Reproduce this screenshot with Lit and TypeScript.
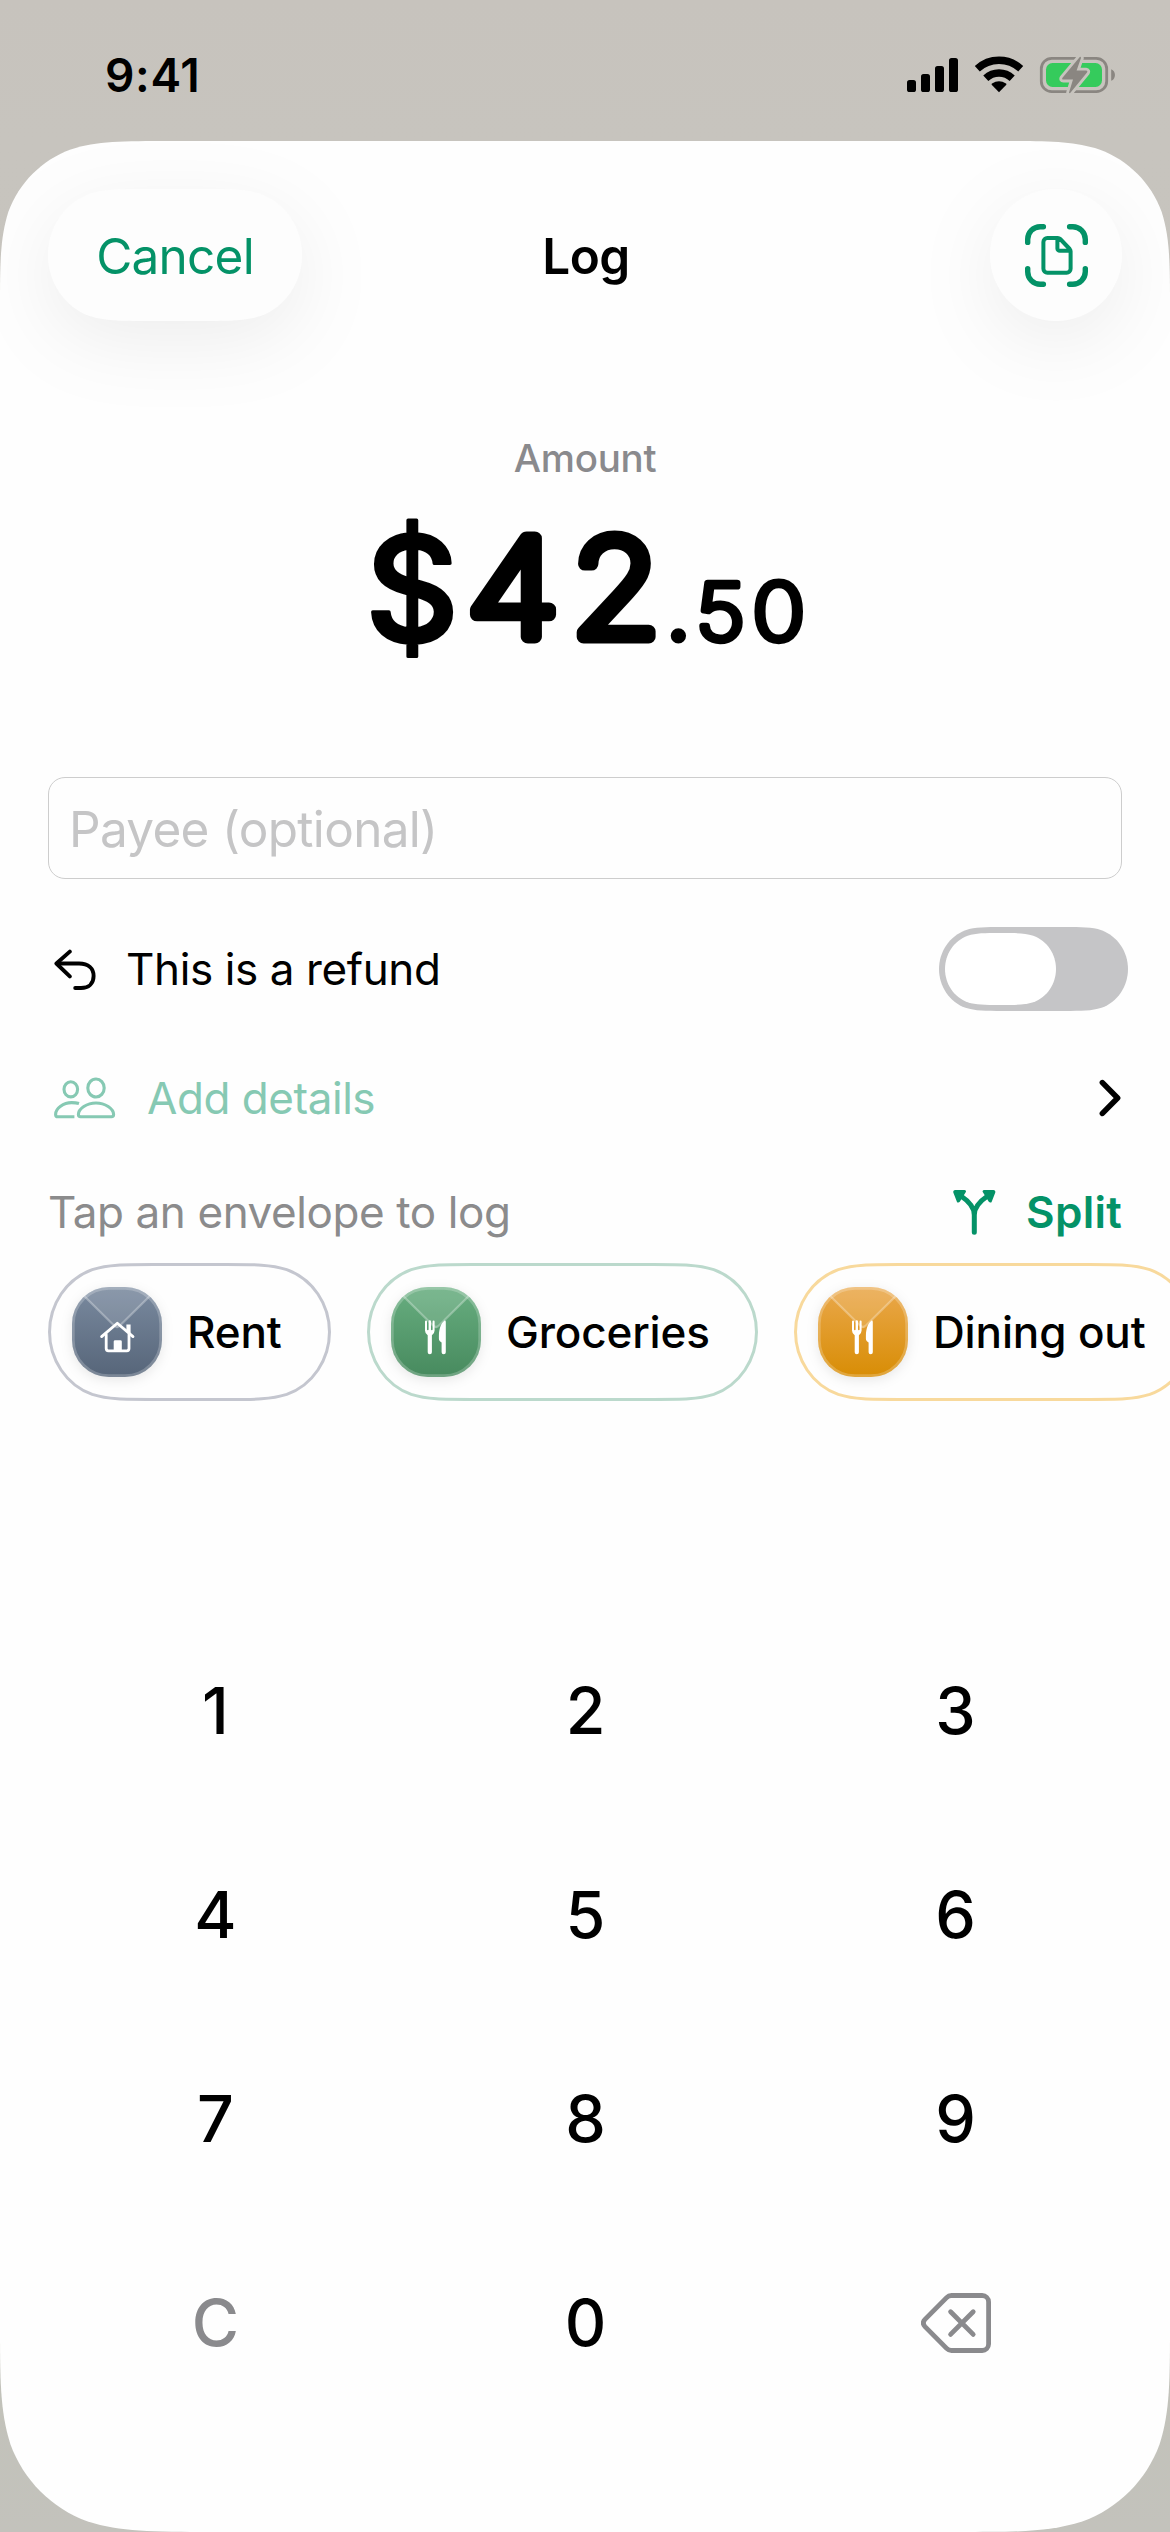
import { LitElement, html, svg, css } from "lit";
import { customElement, property } from "lit/decorators.js";

/** Path of a continuous-curvature rectangle; short ones become capsules. */
function smoothRect(w: number, h: number, r: number, inset = 0, rBottom = r): string {
  const x0 = inset;
  const y0 = inset;
  const x1 = w - inset;
  const y1 = h - inset;
  const capsule = y1 - y0 < 3.05 * r;
  const corner = (cx: number, cy: number, sx: number, sy: number, q: number, reverse: boolean) => {
    const side: number[][] = capsule
      ? [[0, 1], [0, 0.59], [0.246, 0.215], [0.63149, 0.07491]]
      : [[0, 1.52866], [0, 1.08849], [0, 0.86841], [0.07491, 0.63149], [0.16906, 0.37282], [0.37282, 0.16906], [0.63149, 0.07491]];
    const pts = [...side, [0.86841, 0], [1.08849, 0], [1.52866, 0]];
    const ordered = reverse ? pts.reverse() : pts;
    const p = ordered.map(([a, b]) => `${(cx + sx * a * q).toFixed(2)} ${(cy + sy * b * q).toFixed(2)}`);
    let d = `L${p[0]}`;
    for (let i = 1; i < p.length; i += 3) d += `C${p[i]} ${p[i + 1]} ${p[i + 2]}`;
    return d;
  };
  const path =
    corner(x0, y0, 1, 1, r, false) +
    corner(x1, y0, -1, 1, r, true) +
    corner(x1, y1, -1, -1, rBottom, false) +
    corner(x0, y1, 1, -1, rBottom, true);
  return "M" + path.slice(1) + "Z";
}

const GREEN = "#049267";

const houseGlyph = svg`
  <g fill="none" stroke="#fff" stroke-width="2.8" stroke-linecap="round" stroke-linejoin="round">
    <path d="M29.6 49.6L45.3 36.2L61 49.6"/>
    <path d="M34.2 47.5V61.6A2.2 2.2 0 0 0 36.4 63.8H54.8A2.2 2.2 0 0 0 57 61.6V47.5"/>
  </g>
  <path fill="#fff" d="M54.4 37.6H58.6V47L54.4 43.4Z"/>
  <path fill="#fff" d="M41.7 64V54.6A1.4 1.4 0 0 1 43.1 53.2H48.4A1.4 1.4 0 0 1 49.8 54.6V64Z"/>`;

const forkGlyph = svg`
  <g fill="#fff">
    <path d="M34 34.4A1 1 0 0 1 36 34.4V42.4A.8 .8 0 0 0 37.6 42.4V34.4A1 1 0 0 1 40 34.4V42.4A.8 .8 0 0 0 41.6 42.4V34.4A1 1 0 0 1 43.6 34.4V43.6Q43.6 46.6 40.9 48.3V65.2A2.1 2.1 0 0 1 36.7 65.2V48.3Q34 46.6 34 43.6Z"/>
    <path d="M54.8 35V65.2A2.1 2.1 0 0 1 50.6 65.2V55.6L48.9 54.2Q47.8 53.3 47.9 51.8V48.4C48 41 50.4 36 53 33.9C54 33.2 54.8 33.8 54.8 35Z"/>
  </g>`;

interface Envelope {
  name: string;
  width: number;
  ring: string;
  top: string;
  bottom: string;
  glyph: unknown;
}

const ENVELOPES: Envelope[] = [
  { name: "Rent", width: 283, ring: "#c4c6cf", top: "#7a8a9f", bottom: "#566579", glyph: houseGlyph },
  { name: "Groceries", width: 391, ring: "#bbd9cc", top: "#68ae80", bottom: "#478a5e", glyph: forkGlyph },
  { name: "Dining out", width: 400, ring: "#f8d99c", top: "#eaa84c", bottom: "#d88d05", glyph: forkGlyph },
];

@customElement("envelope-chip")
export class EnvelopeChip extends LitElement {
  @property({ attribute: false }) envelope!: Envelope;

  static styles = css`
    :host { display: block; flex: none; }
    .chip {
      position: relative;
      display: flex;
      align-items: center;
      height: 138px;
      box-sizing: border-box;
      padding-left: 24px;
      gap: 25px;
    }
    .ring { position: absolute; left: 0; top: 0; }
    .tile { flex: none; overflow: visible; filter: drop-shadow(0 3px 6px rgba(0, 0, 0, 0.09)); position: relative; }
    .name { font: 500 44px/60px Inter, sans-serif; letter-spacing: -0.14px; color: #000; white-space: nowrap; }
  `;

  render() {
    const e = this.envelope;
    return html`
      <div class="chip" style="width:${e.width}px">
        <svg class="ring" width=${e.width} height="138">
          <path d=${smoothRect(e.width, 138, 67.7, 1.5)} fill="none" stroke=${e.ring} stroke-width="3"/>
        </svg>
        <svg class="tile" width="90" height="90">
          <defs>
            <linearGradient id="g" x1="0" y1="0" x2="0" y2="1">
              <stop offset="0" stop-color=${e.top}/><stop offset="1" stop-color=${e.bottom}/>
            </linearGradient>
            <clipPath id="c"><rect width="90" height="90" rx="37"/></clipPath>
          </defs>
          <rect width="90" height="90" rx="37" fill="url(#g)"/>
          <g clip-path="url(#c)">
            <path d="M0 -3L45 41.5L90 -3Z" fill="#fff" fill-opacity=".13"/>
            <path d="M0 -3L42 38.5Q45 41.5 48 38.5L90 -3" fill="none" stroke="#fff" stroke-opacity=".3" stroke-width="2.2"/>
            <rect width="90" height="90" rx="37" fill="none" stroke="#fff" stroke-opacity=".22" stroke-width="5.4"/>
          </g>
          ${e.glyph}
        </svg>
        <span class="name">${e.name}</span>
      </div>`;
  }
}

@customElement("status-bar")
export class StatusBar extends LitElement {
  static styles = css`
    :host { display: block; }
    .bar {
      display: flex;
      justify-content: space-between;
      align-items: center;
      height: 141px;
      box-sizing: border-box;
      padding: 8px 53px 0 105px;
    }
    .time { font: 600 46px/60px Inter, sans-serif; letter-spacing: 0.7px; }
  `;

  render() {
    return html`
      <div class="bar">
        <span class="time">9:41</span>
        <svg width="210" height="42" viewBox="907 53 210 42">
          <rect x="907" y="79" width="9" height="12" rx="2.6"/>
          <rect x="921" y="73" width="9" height="18" rx="2.6"/>
          <rect x="935" y="65" width="9" height="26" rx="2.6"/>
          <rect x="949" y="57" width="9" height="34" rx="2.6"/>
          <g fill="none" stroke="#000" stroke-width="7.4">
            <path d="M977.3 67.7A32 32 0 0 1 1020.7 67.7"/>
            <path d="M985.8 77.2A19.2 19.2 0 0 1 1012.2 77.2"/>
          </g>
          <path d="M999 91.2L991.9 84.1C991.4 83.5 991.5 83 992 82.6Q999 78 1006 82.6C1006.5 83 1006.6 83.5 1006.1 84.1Z"/>
          <rect x="1041.3" y="57.3" width="65.4" height="33.4" rx="10.5" fill="none" stroke="#8a8681" stroke-width="2.8"/>
          <path d="M1111.2 68.2C1116.2 70 1116.2 78 1111.2 79.8Z" fill="#8a8681"/>
          <rect x="1046" y="62" width="56" height="24" rx="6.5" fill="#35cb5c"/>
          <path d="M1079.8 56L1062.5 76.8Q1061.4 78.6 1063.4 78.6H1073L1069 91.6Q1069.4 92.6 1070.4 91.8L1087 71.6Q1088 69.8 1086 69.6H1076.6L1081 57Q1080.8 55.4 1079.8 56Z"
            fill="#8a8681" stroke="#c7c4be" stroke-width="5.6" paint-order="stroke" stroke-linejoin="round"/>
        </svg>
      </div>`;
  }
}

@customElement("app-root")
export class AppRoot extends LitElement {
  static styles = css`
    :host {
      display: block;
      width: 1170px;
      height: 2532px;
      overflow: hidden;
      background: linear-gradient(#c7c3bd, #c7c4be 140px, #c2c2ba 2400px, #c3c2bc);
      font-family: Inter, "Liberation Sans", sans-serif;
      color: #000;
    }
    .sheet {
      display: flex;
      flex-direction: column;
      height: 2391px;
      box-sizing: border-box;
      padding-top: 48px;
      background: #fefefe;
    }
    svg { display: block; flex: none; }
    .header {
      display: grid;
      grid-template-columns: 1fr auto 1fr;
      align-items: center;
      height: 132px;
      padding: 0 48px;
    }
    .pill, .round {
      display: grid;
      place-items: center;
      height: 132px;
    }
    .pill { width: 254px; }
    .round { width: 132px; justify-self: end; }
    .pill > *, .round > * { grid-area: 1 / 1; }
    .shape { overflow: visible; filter: drop-shadow(0 20px 38px rgba(0, 0, 0, 0.065)); }
    .cancel { font-size: 49.5px; line-height: 60px; letter-spacing: -0.77px; color: #049267; padding-top: 1px; z-index: 1; }
    .icon { z-index: 1; }
    .title { font-size: 49.5px; font-weight: 600; line-height: 60px; letter-spacing: -0.56px; padding: 1px 0 0 2px; }
    .label {
      margin-top: 114px;
      text-align: center;
      font-size: 38.5px;
      font-weight: 500;
      line-height: 46px;
      letter-spacing: -0.25px;
      color: #8a8a8d;
    }
    .amount { margin-top: 9px; overflow: visible; }
    .amount text { text-anchor: middle; font-family: Inter, sans-serif; stroke: #000; stroke-linejoin: round; stroke-linecap: round; }
    .currency { font-size: 145px; font-weight: 530; stroke-width: 3.4px; }
    .whole { font-size: 136px; font-weight: 190; stroke-width: 13px; }
    .cents { font-size: 79px; font-weight: 170; stroke-width: 6.4px; }
    .point { font-weight: 300; stroke-width: 7px; }
    .payee {
      margin: 67px 48px 0;
      height: 102px;
      box-sizing: border-box;
      border: 1.2px solid #cdcdcd;
      border-radius: 17px;
      padding-left: 20px;
      font-size: 49.5px;
      line-height: 102px;
      letter-spacing: -0.7px;
      color: #c5c5c6;
    }
    .refund {
      display: flex;
      align-items: center;
      height: 84px;
      margin: 48px 42px 0 54px;
      font-size: 44px;
      letter-spacing: -0.39px;
    }
    .refund span { flex: 1; padding-left: 28px; }
    .details {
      display: flex;
      align-items: center;
      height: 60px;
      margin: 57px 49px 0 54px;
      font-size: 44px;
      letter-spacing: -0.45px;
      color: #86c9b3;
    }
    .details span { flex: 1; padding-left: 31px; }
    .hint {
      display: flex;
      align-items: center;
      height: 48px;
      margin: 60px 48px 0 48px;
      font-size: 44px;
      letter-spacing: -0.41px;
      color: #8b8b8c;
    }
    .hint .prompt { flex: 1; }
    .split { display: flex; align-items: center; gap: 30px; color: #049267; font-weight: 600; letter-spacing: 0.25px; }
    .chips { display: flex; gap: 36px; margin: 26.5px 0 0 48px; overflow: visible; }
    .keys {
      display: grid;
      grid-template-columns: repeat(3, 370px);
      grid-auto-rows: 204px;
      justify-content: center;
      margin-top: 208.5px;
      padding-left: 1px;
    }
    .key { display: grid; place-items: center; font-size: 64.5px; font-weight: 500; line-height: 80px; }
    .muted { color: #8a8a8d; }
  `;

  render() {
    return html`
      <status-bar></status-bar>
      <div class="sheet" style="clip-path:path('${smoothRect(1170, 2391, 112, 0, 139)}')">
        <div class="header">
          <div class="pill">
            <svg class="shape" width="254" height="132"><path d=${smoothRect(254, 132, 66)} fill="#fdfdfd"/></svg>
            <span class="cancel">Cancel</span>
          </div>
          <span class="title">Log</span>
          <div class="round">
            <svg class="shape" width="132" height="132"><circle cx="66" cy="66" r="66" fill="#fdfdfd"/></svg>
            <svg class="icon" width="63" height="63" viewBox="0 0 63 63" fill="none" stroke=${GREEN} stroke-linecap="round" stroke-linejoin="round">
              <path stroke-width="5.4" d="M2.7 18.4V15.4A12.6 12.6 0 0 1 15.2 2.7H18.4M44.6 2.7H47.8A12.6 12.6 0 0 1 60.3 15.2V18.4M60.3 44.6V47.8A12.6 12.6 0 0 1 47.8 60.3H44.6M18.4 60.3H15.2A12.6 12.6 0 0 1 2.7 47.8V44.6"/>
              <path stroke-width="4" d="M18.4 18V44.8A4 4 0 0 0 22.4 48.8H41.6A4 4 0 0 0 45.6 44.8V27.2Q45.6 26 44.7 25L35.2 15Q34.2 14 32.8 14H22.4A4 4 0 0 0 18.4 18ZM32.4 15V24.4A2.4 2.4 0 0 0 34.8 26.8H45"/>
            </svg>
          </div>
        </div>

        <div class="label">Amount</div>
        <svg class="amount" width="1170" height="220" viewBox="0 490 1170 220">
          <text class="currency" x="412" y="640.5">$</text>
          <text class="whole" transform="translate(513 636.5) scale(1.11 1)">4</text>
          <text class="whole" transform="translate(616 636.5) scale(1.07 1)">2</text>
          <text class="cents point" transform="translate(678.3 639.8)">.</text>
          <text class="cents" transform="translate(720.3 640) scale(1.08 1)">5</text>
          <text class="cents" transform="translate(778.8 640) scale(1.12 1)">0</text>
        </svg>

        <div class="payee">Payee (optional)</div>

        <div class="refund">
          <svg width="44" height="41" viewBox="0 0 44 41" fill="none" stroke="#000" stroke-width="3.9" stroke-linecap="round" stroke-linejoin="round">
            <path d="M15.8 2.6L2.4 14.5L15.8 27.4"/>
            <path d="M3.5 14.5H25C34.5 14.5 39.6 19.5 39.6 27S34.6 39 27 39H21.2"/>
          </svg>
          <span>This is a refund</span>
          <svg width="189" height="84">
            <path d=${smoothRect(189, 84, 42)} fill="#c5c5c7"/>
            <path transform="translate(6 6)" d=${smoothRect(111, 72, 36)} fill="#fff"/>
          </svg>
        </div>

        <div class="details">
          <svg width="62" height="42" viewBox="0 0 62 42" fill="none" stroke="#86c9b3" stroke-width="3.1" stroke-linecap="round" stroke-linejoin="round">
            <ellipse cx="16.8" cy="12.3" rx="6.8" ry="7.6"/>
            <ellipse cx="42" cy="11" rx="8.2" ry="9"/>
            <path d="M42 26C51 26 59.6 31.6 59.6 37.6Q59.6 39.8 57.4 39.8H26.6Q24.4 39.8 24.4 37.6C24.4 31.6 33 26 42 26Z"/>
            <path stroke-linecap="butt" d="M25 26.6C22.5 25.8 20 25.6 17.6 25.6C9.5 25.6 1.6 31.2 1.6 37.4Q1.6 39.8 4 39.8H20.4"/>
          </svg>
          <span>Add details</span>
          <svg width="22" height="38" viewBox="0 0 22 38" fill="none" stroke="#000" stroke-width="5.6" stroke-linecap="round" stroke-linejoin="round">
            <path d="M3.4 3.6L18.6 19L3.4 34.4"/>
          </svg>
        </div>

        <div class="hint">
          <span class="prompt">Tap an envelope to log</span>
          <div class="split">
            <svg width="43" height="46" viewBox="0 0 43 46" fill=${GREEN}>
              <path d="M8 7C15.5 12 21.3 17.5 21.3 26V43.2M34.6 7C27.1 12 21.3 17.5 21.3 26" fill="none" stroke=${GREEN} stroke-width="5" stroke-linecap="round"/>
              <path d="M2.2 1H11.4C13 1 13.6 2.6 12.4 3.8L6.8 12.8C5.8 14 4.2 13.8 3.8 12.4L.3 3.4C0 2 .8 1 2.2 1Z"/>
              <path d="M40.4 1H31.2C29.6 1 29 2.6 30.2 3.8L35.8 12.8C36.8 14 38.4 13.8 38.8 12.4L42.3 3.4C42.6 2 41.8 1 40.4 1Z"/>
            </svg>
            <span>Split</span>
          </div>
        </div>

        <div class="chips">
          ${ENVELOPES.map((e) => html`<envelope-chip .envelope=${e}></envelope-chip>`)}
        </div>

        <div class="keys">
          ${["1", "2", "3", "4", "5", "6", "7", "8", "9"].map((k) => html`<span class="key">${k}</span>`)}
          <span class="key muted">C</span>
          <span class="key">0</span>
          <span class="key">
            <svg width="70" height="60" viewBox="0 0 70 60" fill="none" stroke="#8a8a8d" stroke-width="4.8" stroke-linecap="round" stroke-linejoin="round">
              <path d="M30.5 2.5H61.2A6.4 6.4 0 0 1 67.6 8.9V51.1A6.4 6.4 0 0 1 61.2 57.5H30.5Q27.6 57.5 25.6 55.4L4 33.6Q.6 30 4 26.4L25.6 4.6Q27.6 2.5 30.5 2.5Z"/>
              <path d="M29.6 18.8L52.2 41.4M52.2 18.8L29.6 41.4"/>
            </svg>
          </span>
        </div>
      </div>`;
  }
}
